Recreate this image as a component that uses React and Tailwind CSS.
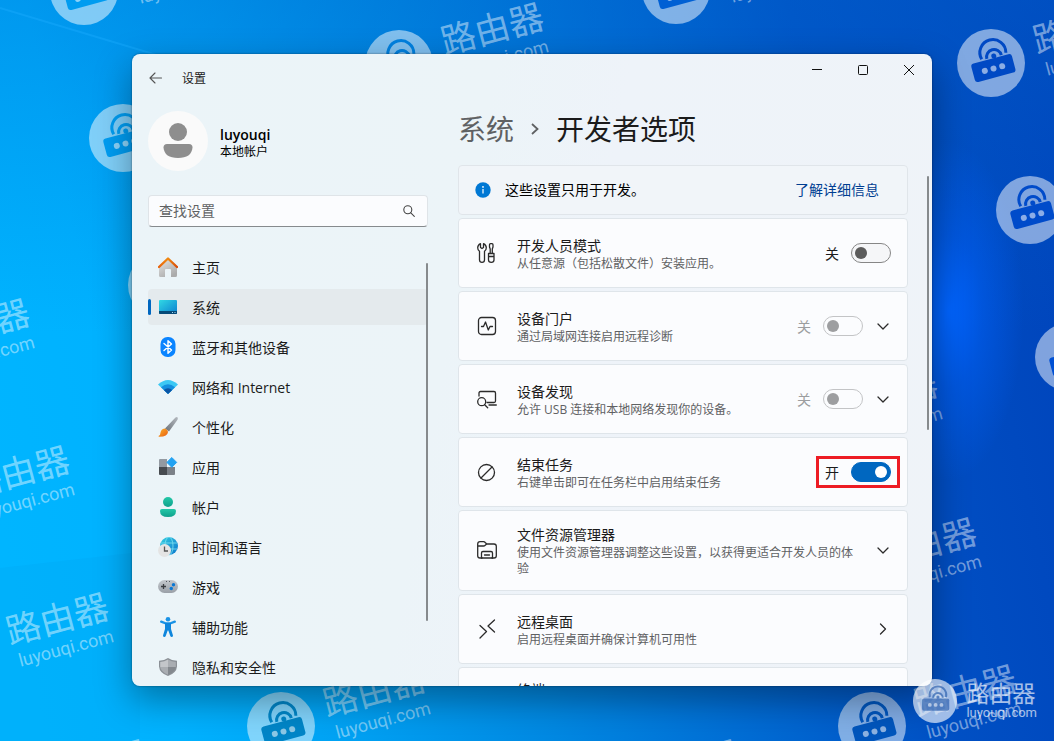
import { useState } from 'react'

// 水印标志
function RouterMark() {
  return (
    <g>
      <circle r="34" fill="#fff" fillOpacity="0.5" />
      <g transform="rotate(-15)">
        <rect x="-20" y="-4" width="42" height="19" rx="3" fill="var(--mark)" />
        <path d="M-8 -6 A13 13 0 1 1 17 -6" fill="none" stroke="var(--mark)" strokeWidth="3" />
        <path d="M-3 -5 A7.500 7.500 0 1 1 12 -5" fill="none" stroke="var(--mark)" strokeWidth="3" />
        <circle cx="4.500" cy="-6" r="2.500" fill="var(--mark)" />
        <g fill="#fff" fillOpacity="0.55">
          <circle cx="-8" cy="6" r="3" />
          <circle cx="1" cy="6" r="3" />
          <circle cx="10" cy="6" r="3" />
        </g>
      </g>
    </g>
  )
}

const marks = [
  { x: 84, y: -9, color: '#009cf0' },
  { x: 123, y: 138, color: '#009df2' },
  { x: 162, y: 285, color: '#00a5f5' },
  { x: -115, y: 360, color: '#00adff' },
  { x: -75, y: 507, color: '#00adff' },
  { x: -36, y: 654, color: '#00adff' },
  { x: 3, y: 801, color: '#00a8f8' },
  { x: 281, y: 726, color: '#0086c8' },
  { x: 399, y: 64, color: '#0080df' },
  { x: 676, y: -10, color: '#0060d4' },
  { x: 991, y: 63, color: '#0049c4' },
  { x: 1030, y: 210, color: '#004bca' },
  { x: 1069, y: 357, color: '#0050d4' },
  { x: 793, y: 431, color: '#0050c0' },
  { x: 832, y: 579, color: '#0050c0' },
  { x: 872, y: 726, color: '#0056bd' },
  { x: 595, y: 801, color: '#0070c0' },
]

function Wallpaper() {
  return (
    <div className="absolute inset-0 overflow-hidden bg-[linear-gradient(78deg,#00b6ff_0%,#00b2ff_15%,#00a0f2_30%,#0088e2_46%,#006cd4_62%,#0050c4_78%,#0042ba_100%)]">
      <div className="absolute inset-0 bg-[linear-gradient(180deg,#0068d059_0%,transparent_45%)]" />
      <div className="absolute inset-0 bg-[radial-gradient(75px_170px_at_90%_42%,#0064ff_0%,#0060f880_45%,transparent_100%)]" />
      <svg className="absolute inset-0 h-full w-full" viewBox="0 0 1054 741" preserveAspectRatio="xMinYMin slice" aria-hidden="true">
        <path d="M0 8 L180 62" stroke="#1cacff" strokeOpacity="0.4" strokeWidth="2" />
        <path d="M0 568 L140 552 V741 H0 Z" fill="#0096e0" fillOpacity="0.12" />
        {marks.map((m, i) => (
          <g key={i} transform={`translate(${m.x} ${m.y})`} style={{ '--mark': m.color }}>
            <RouterMark />
            <g transform="rotate(-15)" fill="#fff" fillOpacity="0.45" textAnchor="middle">
              <text x="99" y="3" fontSize="35" fontFamily="'Noto Sans CJK SC', sans-serif">路由器</text>
              <text x="100" y="27" fontSize="18" fontFamily="Roboto, sans-serif">luyouqi.com</text>
            </g>
          </g>
        ))}
      </svg>
    </div>
  )
}

function HomeIcon() {
  return (
    <svg viewBox="0 0 20 20" className="size-5">
      <defs>
        <linearGradient id="wall" x1="0" y1="0" x2="0.6" y2="1"><stop stopColor="#e6e6e6" /><stop offset="1" stopColor="#ababab" /></linearGradient>
        <linearGradient id="roof" x1="0" x2="1"><stop stopColor="#e8630c" /><stop offset="0.5" stopColor="#f08a10" /><stop offset="1" stopColor="#d84a08" /></linearGradient>
      </defs>
      <path d="M10 2 L19 10.500 V18.500 Q19 20 17.500 20 H13 V13 Q13 12 12 12 H8 Q7 12 7 13 V20 H2.500 Q1 20 1 18.500 V10.500 Z" fill="url(#wall)" />
      <path d="M1 10 L10 1.500 L19 10" fill="none" stroke="url(#roof)" strokeWidth="2.400" strokeLinecap="round" strokeLinejoin="round" />
    </svg>
  )
}

function SystemIcon() {
  return (
    <svg viewBox="0 0 20 20" className="size-5">
      <defs><linearGradient id="scr" x1="0" y1="0" x2="1" y2="1"><stop stopColor="#31d8e4" /><stop offset="1" stopColor="#0b7fd0" /></linearGradient></defs>
      <rect x="1" y="3" width="18" height="14" rx="1" fill="url(#scr)" />
      <path d="M1 14 H19 V16 Q19 17 18 17 H2 Q1 17 1 16 Z" fill="#064a78" />
      <path d="M14 15.500 H15 M16.500 15.500 H17.500" stroke="#a8dcf5" strokeWidth="1" />
    </svg>
  )
}

function BluetoothIcon() {
  return (
    <svg viewBox="0 0 20 20" className="size-5">
      <rect x="2.500" y="0" width="15" height="20" rx="7" fill="#0a84ff" />
      <path d="M6 6.500 L13.500 13 L10 16.300 V3.700 L13.500 7 L6 13.500" fill="none" stroke="#fff" strokeWidth="1.400" strokeLinejoin="round" strokeLinecap="round" />
    </svg>
  )
}

function WifiIcon() {
  return (
    <svg viewBox="0 0 20 20" className="size-5">
      <path d="M0 7.500 Q10 -1.500 20 7.500 L10 17 Z" fill="#3cc8f4" />
      <path d="M3 10.200 Q10 4.500 17 10.200 L10 17 Z" fill="#1490df" />
      <path d="M5.800 13 Q10 9.500 14.200 13 L10 17 Z" fill="#0a55a5" />
    </svg>
  )
}

function BrushIcon() {
  return (
    <svg viewBox="0 0 20 20" className="size-5">
      <defs>
        <linearGradient id="hdl" x1="1" y1="0" x2="0" y2="1"><stop stopColor="#b4b9bf" /><stop offset="1" stopColor="#6c7279" /></linearGradient>
        <linearGradient id="tip" x1="0" y1="0" x2="1" y2="1"><stop stopColor="#fbb22a" /><stop offset="1" stopColor="#e85d10" /></linearGradient>
      </defs>
      <path d="M17.500 0.500 Q19.500 -0.500 19.800 1 Q20 2.200 19 3.500 L11 14.500 L7 11.500 Z" fill="url(#hdl)" />
      <path d="M6.500 11.500 Q9.500 12 10 15 Q9.500 20 1 19.800 Q0 19.300 0.800 18.700 Q2.500 18 2.500 15.500 Q3.200 12 6.500 11.500 Z" fill="url(#tip)" />
    </svg>
  )
}

function AppsIcon() {
  return (
    <svg viewBox="0 0 20 20" className="size-5">
      <path d="M1 3 Q1 2 2 2 H9 V10 H1 Z" fill="#939aa2" />
      <path d="M1 10 H9 V18 H2 Q1 18 1 17 Z" fill="#474b50" />
      <path d="M9 10 H17 V17 Q17 18 16 18 H9 Z" fill="#7b8188" />
      <path d="M13.800 0.500 L18.700 5.400 L13.800 10.300 L8.900 5.400 Z" fill="#22a2f2" stroke="#22a2f2" strokeWidth="1" strokeLinejoin="round" />
    </svg>
  )
}

function AccountIcon() {
  return (
    <svg viewBox="0 0 20 20" className="size-5">
      <defs><linearGradient id="acc" x1="0" y1="0" x2="0" y2="1"><stop stopColor="#24c8a8" /><stop offset="1" stopColor="#0fa08c" /></linearGradient></defs>
      <circle cx="10" cy="5" r="5" fill="url(#acc)" />
      <path d="M4 12 H16 Q18 12 18 14 Q18 20 10 20 Q2 20 2 14 Q2 12 4 12 Z" fill="url(#acc)" />
    </svg>
  )
}

function TimeIcon() {
  return (
    <svg viewBox="0 0 20 20" className="size-5">
      <defs><linearGradient id="glb" x1="0" y1="0" x2="1" y2="1"><stop stopColor="#34cfe0" /><stop offset="1" stopColor="#0a74cc" /></linearGradient></defs>
      <circle cx="11" cy="9" r="9" fill="url(#glb)" />
      <g fill="none" stroke="#7ee3f2" strokeWidth="0.800">
        <path d="M3 6 H19 M3 12 H19" />
        <ellipse cx="11" cy="9" rx="4" ry="9" />
      </g>
      <circle cx="6.500" cy="13.500" r="6.500" fill="#e4e4e4" />
      <path d="M6.500 9.500 V14 H10" fill="none" stroke="#555" strokeWidth="1.300" />
    </svg>
  )
}

function GameIcon() {
  return (
    <svg viewBox="0 0 20 20" className="size-5">
      <defs><linearGradient id="pad" x1="0" y1="0" x2="0" y2="1"><stop stopColor="#c3c7cc" /><stop offset="1" stopColor="#9aa0a8" /></linearGradient></defs>
      <rect x="0" y="3" width="20" height="13" rx="6.500" fill="url(#pad)" />
      <path d="M5.500 7 V12 M3 9.500 H8" stroke="#3a3d42" strokeWidth="1.300" />
      <circle cx="15.500" cy="7.700" r="1.700" fill="#0a78d4" />
      <circle cx="13.300" cy="11.500" r="1.700" fill="#0a78d4" />
      <path d="M8 4.500 H9 M11 4.500 H12" stroke="#55595f" strokeWidth="1" />
    </svg>
  )
}

function AccessIcon() {
  return (
    <svg viewBox="0 0 20 20" className="size-5">
      <circle cx="10" cy="2.300" r="2.300" fill="#1a93e6" />
      <path d="M3.200 4.700 L8 6.500 H12 L16.800 4.700" fill="none" stroke="#1a93e6" strokeWidth="2.400" strokeLinecap="round" strokeLinejoin="round" />
      <path d="M7 6 H13 V12 L15 18.500 Q15 20 13.500 20 Q12.700 20 12.300 19 L10.300 13.500 H9.700 L7.700 19 Q7.300 20 6.500 20 Q5 20 5 18.500 L7 12 Z" fill="#0f86dc" />
    </svg>
  )
}

function ShieldIcon() {
  return (
    <svg viewBox="0 0 20 20" className="size-5">
      <path d="M10 1 Q13.500 3.500 19 3.700 V9.500 Q18.500 16 10 19 Q1.500 16 1 9.500 V3.700 Q6.500 3.500 10 1 Z" fill="#8b9096" />
      <path d="M10 2.500 Q6.500 4.900 2.200 5 V10 H10 Z" fill="#c3c6ca" />
      <path d="M10 2.500 Q13.500 4.900 17.800 5 V10 H10 Z" fill="#a9adb2" />
      <path d="M10 10 H2.200 Q3 15 10 17.700 Z" fill="#a9adb2" />
      <path d="M10 10 H17.800 Q17 15 10 17.700 Z" fill="#83888e" />
    </svg>
  )
}

// 卡片左侧的线条图标
function LineIcon({ children }) {
  return (
    <svg viewBox="0 0 20 20" className="size-5 shrink-0" fill="none" stroke="#2b2b2b" strokeWidth="1.300" strokeLinecap="round" strokeLinejoin="round">
      {children}
    </svg>
  )
}

const toolsIcon = (
  <LineIcon>
    <path d="M3.500 0.700 V4.500 L5 5.500 L6.500 4.500 V0.700 Q9.300 2 9.300 4.700 Q9.300 7 7.500 8.200 V17 Q7.500 19.300 5 19.300 Q2.500 19.300 2.500 17 V8.200 Q0.700 7 0.700 4.700 Q0.700 2 3.500 0.700 Z" />
    <path d="M12.500 1.700 Q12.500 0.700 13.500 0.700 H15 Q16 0.700 16 1.700 V4 L15.300 6 V10.500 H13.200 V6 L12.500 4 Z M11.500 10.500 H17 V17 Q17 19.300 14.300 19.300 Q11.500 19.300 11.500 17 Z M11.500 13.500 H17" />
  </LineIcon>
)

const pulseIcon = (
  <LineIcon>
    <rect x="1.500" y="1.500" width="17" height="17" rx="3" />
    <path d="M4.500 10.500 H6.500 L8.500 6 L11.300 14 L13 10.500 H15.500" />
  </LineIcon>
)

const discoverIcon = (
  <LineIcon>
    <path d="M2 7 V4 Q2 2.500 3.500 2.500 H17 Q18.500 2.500 18.500 4 V12 Q18.500 13.500 17 13.500 H10 M12 16 H19.300" />
    <circle cx="4.700" cy="12.700" r="4" />
    <path d="M7.700 15.700 L10.700 18.700" />
  </LineIcon>
)

const stopIcon = (
  <LineIcon>
    <circle cx="9.500" cy="10.500" r="8" />
    <path d="M4 16 L15 5" />
  </LineIcon>
)

const folderIcon = (
  <LineIcon>
    <path d="M5 18 H3 Q0.700 18 0.700 15.700 V4 Q0.700 1.700 3 1.700 H6.500 Q7.500 1.700 8.200 2.500 L9.700 4 H17 Q19.300 4 19.300 6.300 V15.700 Q19.300 18 17 18 H15 M0.700 6 H6.500 Q7.500 6 8.200 5.300 L9.700 4" />
    <path d="M4.500 18 V13 Q4.500 11.500 6 11.500 H14 Q15.500 11.500 15.500 13 V18 Z M7.500 15 H12.500" />
  </LineIcon>
)

const remoteIcon = (
  <LineIcon>
    <path d="M3 6.500 L9.500 12.500 L3 19 M17.500 1 L11 7 L17.500 13" />
  </LineIcon>
)

function Chevron({ right }) {
  return (
    <svg viewBox="0 0 16 16" className="size-4" fill="none" stroke="#2b2b2b" strokeWidth="1.300" strokeLinecap="round" strokeLinejoin="round">
      {right ? <path d="M5.500 3 L10.500 8 L5.500 13" /> : <path d="M3 6 L8 11 L13 6" />}
    </svg>
  )
}

const navItems = [
  { text: '主页', Icon: HomeIcon },
  { text: '系统', Icon: SystemIcon },
  { text: '蓝牙和其他设备', Icon: BluetoothIcon },
  { text: '网络和 Internet', Icon: WifiIcon },
  { text: '个性化', Icon: BrushIcon },
  { text: '应用', Icon: AppsIcon },
  { text: '帐户', Icon: AccountIcon },
  { text: '时间和语言', Icon: TimeIcon },
  { text: '游戏', Icon: GameIcon },
  { text: '辅助功能', Icon: AccessIcon },
  { text: '隐私和安全性', Icon: ShieldIcon },
]

function Sidebar() {
  const [current, setCurrent] = useState('系统')

  return (
    <aside className="flex w-[280px] shrink-0 flex-col pt-[9px]">
      <div className="flex items-center gap-3">
        <svg viewBox="0 0 60 60" className="size-[60px]" aria-hidden="true">
          <circle cx="30" cy="30" r="30" fill="#fafafa" />
          <circle cx="30" cy="21" r="9" fill="#8e8e8e" />
          <path d="M19 33 H41 Q44.500 33 44.500 36.500 Q43.500 47 30 47 Q16.500 47 15.500 36.500 Q15.500 33 19 33 Z" fill="#8e8e8e" />
        </svg>
        <div className="pt-[3px] text-black">
          <p className="text-sm leading-[18px] font-semibold">luyouqi</p>
          <p className="text-xs leading-4">本地帐户</p>
        </div>
      </div>

      <div className="mt-6 flex h-8 shrink-0 items-center rounded-[4px] border border-[#dfe4e8] border-b-[#868a8d] bg-[#fbfcfe] pr-3 pl-[10px]">
        <input
          type="text"
          aria-label="查找设置"
          placeholder="查找设置"
          className="min-w-0 flex-1 bg-transparent text-sm outline-none placeholder:text-[#5f6264]"
        />
        <svg viewBox="0 0 12 12" className="size-3" fill="none" stroke="#444" strokeWidth="1.100" strokeLinecap="round">
          <circle cx="4.800" cy="4.800" r="4" />
          <path d="M7.800 7.800 L11.300 11.300" />
        </svg>
      </div>

      <nav className="relative mt-[22px] flex min-h-0 flex-1 flex-col gap-1 overflow-hidden">
        {navItems.map(({ text, Icon }) => (
          <button
            key={text}
            onClick={() => setCurrent(text)}
            className={`relative flex h-9 shrink-0 items-center gap-[14px] rounded-[4px] px-[10px] text-left text-sm ${current === text ? 'bg-[#e4eaed]' : ''}`}
          >
            {current === text && <span className="absolute top-[10px] left-0 h-4 w-[3px] rounded-full bg-[#0067c0]" />}
            <Icon />
            <span className="pt-[2px]">{text}</span>
          </button>
        ))}
        <span className="absolute top-[14px] right-0 bottom-[65px] w-[2px] rounded-full bg-[#868a8d]" />
      </nav>
    </aside>
  )
}

function Toggle({ label, defaultOn, disabled, marked }) {
  const [on, setOn] = useState(!!defaultOn)
  return (
    <label className={`relative flex h-5 items-center gap-3 text-sm leading-5 ${disabled ? 'text-[#9c9ea0]' : ''}`}>
      <span className="pt-[2px]">{on ? '开' : '关'}</span>
      <input
        type="checkbox"
        role="switch"
        aria-label={label}
        checked={on}
        disabled={disabled}
        onChange={(e) => setOn(e.target.checked)}
        className="grid h-5 w-10 appearance-none content-center rounded-full border border-[#868686] bg-[#f5f6f8] px-[3px] before:size-3 before:rounded-full before:bg-[#5c5c5c] before:content-[''] checked:justify-end checked:border-[#0067c0] checked:bg-[#0067c0] checked:before:bg-white disabled:border-[#c3c4c6] disabled:bg-[#fbfcfe] disabled:before:bg-[#9d9ea0]"
      />
      {marked && <span className="pointer-events-none absolute -inset-x-[9px] -inset-y-[6px] border-3 border-[#ed1c24]" />}
    </label>
  )
}

function Card({ icon, title, desc, children }) {
  return (
    <section className="flex min-h-[70px] shrink-0 items-center gap-5 rounded-[4px] border border-[#dfe5ea] bg-[#fbfcfe] pt-3 pb-[13px] pr-4 pl-[18px]">
      {icon}
      <div className="min-w-0 flex-1 pt-[2px]">
        <h2 className="text-sm leading-5">{title}</h2>
        <p className="text-xs leading-4 text-[#5f6163]">{desc}</p>
      </div>
      <div className="-ml-2 flex items-center gap-3">{children}</div>
    </section>
  )
}

export default function App() {
  return (
    <div className="relative flex h-screen overflow-hidden pt-[54px] pr-[122px] pb-[55px] pl-[132px] font-['Open_Sans','Noto_Sans_CJK_SC',sans-serif] text-[#1b1b1b]">
      <Wallpaper />

      <div className="relative flex min-w-0 flex-1 flex-col overflow-hidden rounded-lg bg-[linear-gradient(100deg,#ebf4f8_0%,#ecf4f8_40%,#eef3f9_55%,#eff3f8_100%)] shadow-[0_14px_36px_rgba(0,0,0,0.36),0_0_2px_rgba(0,0,0,0.5)]">
        <header className="flex shrink-0 items-start justify-between">
          <div className="flex h-12 items-center gap-5 pl-4">
            <button aria-label="返回">
              <svg viewBox="0 0 14 14" className="size-[14px]" fill="none" stroke="#555" strokeWidth="1.100" strokeLinecap="round" strokeLinejoin="round">
                <path d="M13.500 7 H2.200 M7 2 L2 7 L7 12" />
              </svg>
            </button>
            <span className="pt-[2px] text-xs">设置</span>
          </div>
          <div className="flex">
            <button aria-label="最小化" className="grid h-8 w-[46px] place-items-center">
              <svg viewBox="0 0 10 10" className="size-[10px]" stroke="#111"><path d="M0 4.500 H10" /></svg>
            </button>
            <button aria-label="最大化" className="grid h-8 w-[46px] place-items-center">
              <svg viewBox="0 0 10 10" className="size-[10px]" fill="none" stroke="#111"><rect x="0.500" y="0.500" width="9" height="9" rx="1" /></svg>
            </button>
            <button aria-label="关闭" className="grid h-8 w-[46px] place-items-center">
              <svg viewBox="0 0 10 10" className="size-[10px]" stroke="#111"><path d="M0 0 L10 10 M10 0 L0 10" /></svg>
            </button>
          </div>
        </header>

        <div className="flex min-h-0 flex-1 gap-[30px] pr-6 pl-4">
          <Sidebar />

          <main className="flex min-w-0 flex-1 flex-col pt-[9px]">
            <h1 className="flex shrink-0 items-center text-[28px] leading-9">
              <a href="#system" className="text-[#5f6163]">系统</a>
              <svg viewBox="0 0 10 14" className="mr-4 ml-4 h-[14px] w-[10px]" fill="none" stroke="#5f6163" strokeWidth="1.800">
                <path d="M2 2 L7.500 7 L2 12" />
              </svg>
              <span>开发者选项</span>
            </h1>

            <div className="mt-[18px] flex min-h-0 flex-1 flex-col gap-[3px] overflow-hidden">
              <div className="flex h-[50px] shrink-0 items-center gap-[14px] rounded-[4px] border border-[#e0e5ea] bg-[#f1f5f9] pr-7 pl-4 text-sm">
                <svg viewBox="0 0 16 16" className="size-4">
                  <circle cx="8" cy="8" r="7.700" fill="#0078d4" />
                  <path d="M8 7 V11.500" stroke="#fff" strokeWidth="1.200" />
                  <circle cx="8" cy="4.900" r="0.900" fill="#fff" />
                </svg>
                <p className="flex-1 text-black">这些设置只用于开发。</p>
                <a href="#learn" className="text-[#003e92]">了解详细信息</a>
              </div>

              <Card icon={toolsIcon} title="开发人员模式" desc="从任意源（包括松散文件）安装应用。">
                <Toggle label="开发人员模式" />
              </Card>
              <Card icon={pulseIcon} title="设备门户" desc="通过局域网连接启用远程诊断">
                <Toggle label="设备门户" disabled />
                <button aria-label="展开设备门户"><Chevron /></button>
              </Card>
              <Card icon={discoverIcon} title="设备发现" desc="允许 USB 连接和本地网络发现你的设备。">
                <Toggle label="设备发现" disabled />
                <button aria-label="展开设备发现"><Chevron /></button>
              </Card>
              <Card icon={stopIcon} title="结束任务" desc="右键单击即可在任务栏中启用结束任务">
                <Toggle label="结束任务" defaultOn marked />
              </Card>
              <Card icon={folderIcon} title="文件资源管理器" desc="使用文件资源管理器调整这些设置，以获得更适合开发人员的体验">
                <button aria-label="展开文件资源管理器"><Chevron /></button>
              </Card>
              <Card icon={remoteIcon} title="远程桌面" desc="启用远程桌面并确保计算机可用性">
                <button aria-label="打开远程桌面"><Chevron right /></button>
              </Card>
              <section className="h-[70px] shrink-0 rounded-[4px] border border-[#dfe5ea] bg-[#fbfcfe] pt-3 pl-[58px]">
                <h2 className="text-sm leading-5">终端</h2>
              </section>
            </div>
          </main>
        </div>

        <span className="absolute top-[122px] right-[3px] h-[254px] w-[2px] rounded-full bg-[#868a8d]" />
      </div>

      {/* 右下角水印 */}
      <div className="pointer-events-none absolute right-[17px] bottom-[18px] flex items-center gap-[9px] text-white/65">
        <svg viewBox="-34 -34 68 68" className="size-11" style={{ '--mark': '#2c5faeb0' }} aria-hidden="true">
          <circle r="34" fill="#fff" fillOpacity="0.25" />
          <g transform="rotate(15)"><RouterMark /></g>
        </svg>
        <div>
          <p className="text-[23px] leading-6">路由器</p>
          <p className="font-[Roboto,sans-serif] text-[13px] leading-4">luyouqi.com</p>
        </div>
      </div>
    </div>
  )
}
